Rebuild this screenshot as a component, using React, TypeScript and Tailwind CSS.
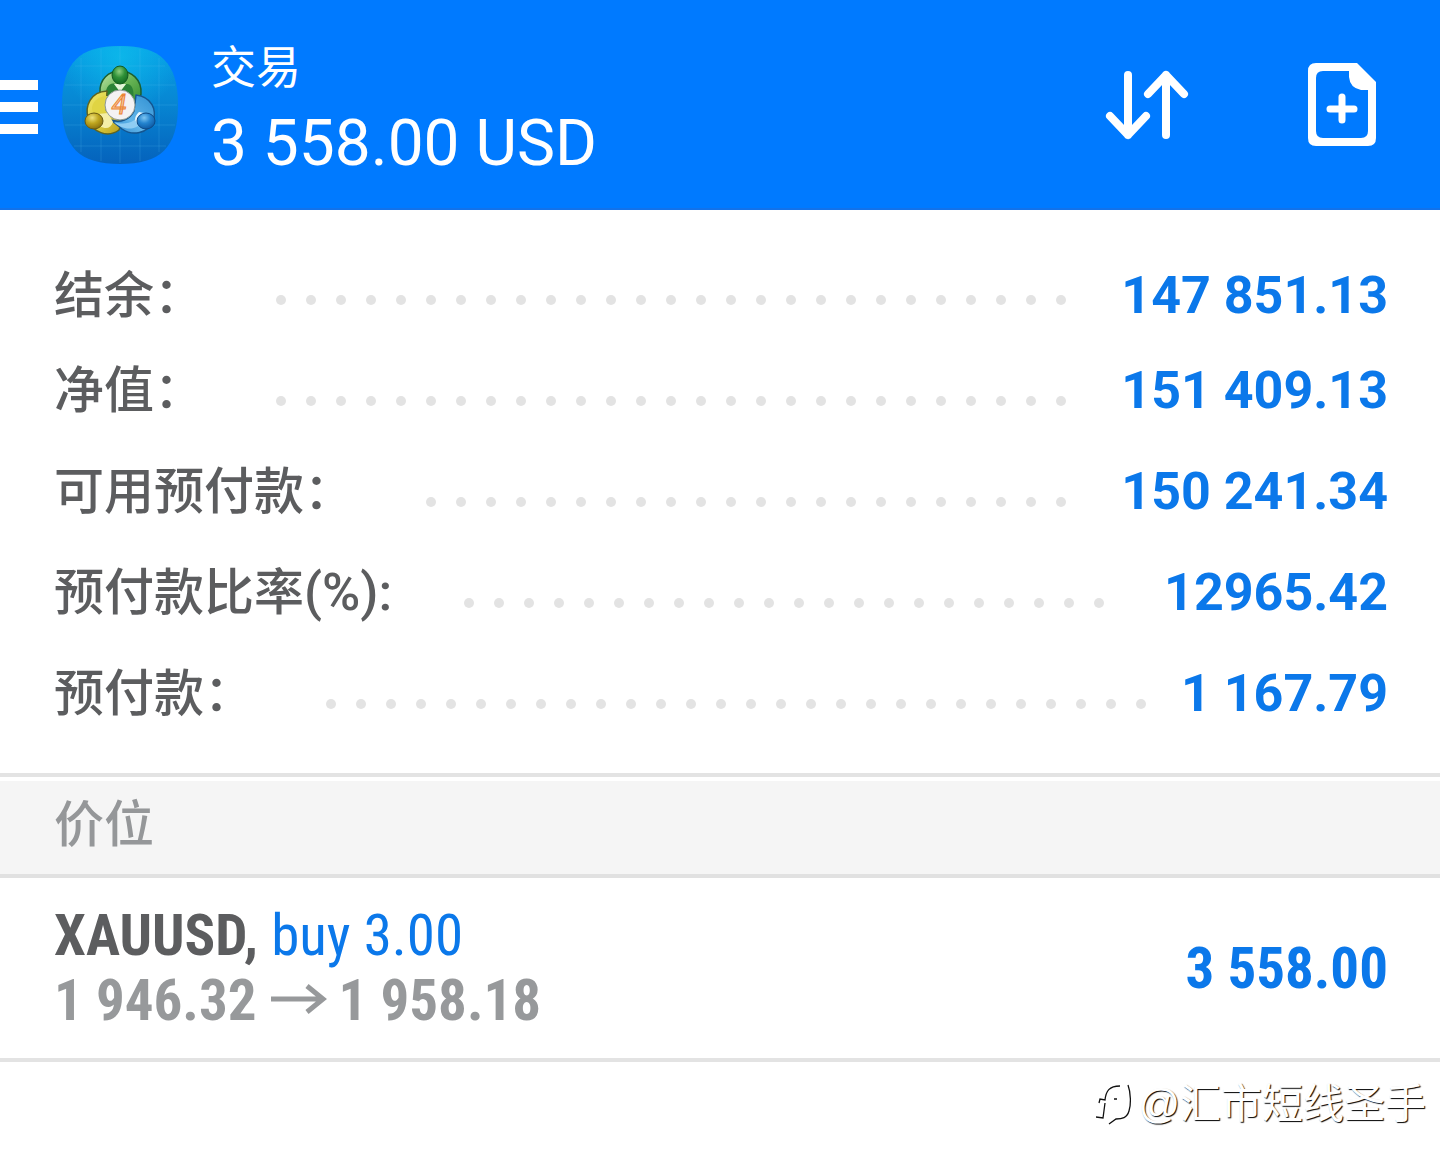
const summary = [
  { label: "结余：", value: "147 851.13" },
  { label: "净值：", value: "151 409.13" },
  { label: "可用预付款：", value: "150 241.34" },
  { label: "预付款比率", unit: "(%):", value: "12965.42" },
  { label: "预付款：", value: "1 167.79" },
];

const dots = Array.from({ length: 60 }, (_, i) => i);

function AppLogo() {
  return (
    <svg viewBox="0 0 116 118" className="h-[118px] w-[116px] shrink-0" role="img" aria-label="MetaTrader 4">
      <defs>
        <linearGradient id="tile" x1="0" y1="0" x2="0" y2="1">
          <stop offset="0" stopColor="#069fe6" />
          <stop offset="0.45" stopColor="#0788d4" />
          <stop offset="1" stopColor="#0562bc" />
        </linearGradient>
        <radialGradient id="glow" cx="0.5" cy="0.1" r="0.5">
          <stop offset="0" stopColor="#10c8ee" stopOpacity="0.6" />
          <stop offset="1" stopColor="#10c8ee" stopOpacity="0" />
        </radialGradient>
        <linearGradient id="greenBody" x1="0" y1="0" x2="1" y2="1">
          <stop offset="0" stopColor="#c3e8ad" />
          <stop offset="0.5" stopColor="#68b455" />
          <stop offset="1" stopColor="#2f8a2c" />
        </linearGradient>
        <linearGradient id="yellowBody" x1="0" y1="0" x2="1" y2="1">
          <stop offset="0" stopColor="#f0e868" />
          <stop offset="0.6" stopColor="#d8c93c" />
          <stop offset="1" stopColor="#b89c1c" />
        </linearGradient>
        <linearGradient id="blueBody" x1="1" y1="0" x2="0" y2="1">
          <stop offset="0" stopColor="#2f8fd2" />
          <stop offset="0.6" stopColor="#62b6ea" />
          <stop offset="1" stopColor="#2a86cc" />
        </linearGradient>
        <radialGradient id="greenHead" cx="0.45" cy="0.3" r="0.7">
          <stop offset="0" stopColor="#8fcf80" />
          <stop offset="0.5" stopColor="#2f9138" />
          <stop offset="1" stopColor="#136a22" />
        </radialGradient>
        <radialGradient id="yellowHead" cx="0.4" cy="0.3" r="0.7">
          <stop offset="0" stopColor="#eee27c" />
          <stop offset="0.5" stopColor="#bfa61f" />
          <stop offset="1" stopColor="#8c7310" />
        </radialGradient>
        <radialGradient id="blueHead" cx="0.4" cy="0.3" r="0.7">
          <stop offset="0" stopColor="#7fc6f2" />
          <stop offset="0.5" stopColor="#2484cf" />
          <stop offset="1" stopColor="#0f5ba5" />
        </radialGradient>
      </defs>
      <path d="M58 0C98 0 116 16 116 59S98 118 58 118 0 102 0 59 18 0 58 0Z" fill="url(#tile)" />
      <path d="M58 0C98 0 116 16 116 59S98 118 58 118 0 102 0 59 18 0 58 0Z" fill="url(#glow)" />
      <path
        d="M19 12V106M39 3V115M58 1V117M78 3V115M97 12V106M13 20H103M3 39H113M1 59H115M3 79H113M12 100H104"
        stroke="#5cc4ee"
        strokeOpacity="0.2"
        strokeWidth="1"
        fill="none"
      />
      <g strokeWidth="1.5" strokeLinejoin="round">
        <path d="M38 47C37 33 47 25 58 25S80 33 79 48L76 60L59 52L41 58Z" fill="url(#greenBody)" stroke="#1d5f2e" />
        <path d="M44 53C42 42 48 36 53 38L58 44L64 38C69 37 73 43 71 53L58 48Z" fill="#2b8236" stroke="none" />
        <path d="M52 38L58 46L64 38Z" fill="#e3f5d8" stroke="none" />
        <path d="M45 45C28 46 23 60 26 72C30 87 46 92 57 84L60 76L44 64Z" fill="url(#yellowBody)" stroke="#5f6420" />
        <path d="M33 55C29 60 29 65 33 68L44 66C41 61 42 55 46 50C40 50 36 52 33 55Z" fill="#e0d443" stroke="none" />
        <path d="M74 49C90 51 95 64 91 75C86 88 70 90 60 83L49 74C58 77 68 74 72 65Z" fill="url(#blueBody)" stroke="#15558f" />
        <path d="M52 76C64 80 74 76 78 67L83 68L76 80C68 85 58 82 52 76Z" fill="#8fcdf3" stroke="none" />
        <path d="M77 66L82 67L76 77C72 75 72 71 77 66Z" fill="#e6f6fe" stroke="none" />
        <path d="M36 68L46 67L51 76C49 82 44 84 38 80Z" fill="#f4eea6" stroke="none" />
      </g>
      <ellipse cx="58" cy="29" rx="8" ry="9" fill="url(#greenHead)" stroke="#145a20" />
      <ellipse cx="32" cy="75" rx="9" ry="8" fill="url(#yellowHead)" stroke="#6b5b10" />
      <ellipse cx="84" cy="75" rx="9" ry="8" fill="url(#blueHead)" stroke="#0f4a86" />
      <circle cx="58" cy="59" r="15" fill="#f4f2f3" stroke="#8d9a94" />
      <text x="57" y="68" textAnchor="middle" fontSize="27" fontStyle="italic" fill="#f6c79c" stroke="#ec8434" strokeWidth="1" className="font-[Roboto,sans-serif]">
        4
      </text>
    </svg>
  );
}

function SortIcon() {
  return (
    <svg viewBox="0 0 84 70" className="h-[70px] w-[84px]" fill="none" stroke="#fff" strokeWidth="8" strokeLinecap="round" strokeLinejoin="round" aria-hidden="true">
      <path d="M23 5V65M5 46L23 65L41 46" />
      <path d="M61 65V5M43 24L61 5L79 24" />
    </svg>
  );
}

function NewOrderIcon() {
  return (
    <svg viewBox="0 0 68 84" className="h-[84px] w-[68px]" aria-hidden="true">
      <path
        fill="#fff"
        fillRule="evenodd"
        d="M8 0H49L68 19V75Q68 83 60 83H8Q0 83 0 75V8Q0 0 8 0ZM15 8Q8 8 8 15V68Q8 75 15 75H53Q60 75 60 68V27H53Q42 25 41 14V8Z"
      />
      <path d="M34 34V57M22 46H46" stroke="#fff" strokeWidth="7" strokeLinecap="round" fill="none" />
    </svg>
  );
}

function PriceArrow() {
  return (
    <svg viewBox="0 0 56 34" className="mr-3 ml-3.5 h-[34px] w-[56px]" fill="none" stroke="#97999b" strokeWidth="5" role="img" aria-label="至">
      <path d="M0 15H52M36 2L52 15L36 28" />
    </svg>
  );
}

function Watermark() {
  return (
    <div className="flex items-center gap-1.5 font-['Liberation_Sans','Noto_Sans_CJK_SC',sans-serif] text-[41px] leading-[56px] text-white [text-shadow:1px_1px_1px_#000]">
      <svg viewBox="0 0 36 42" className="h-[42px] w-[36px]" fill="none" stroke="#111" strokeWidth="1.3" aria-hidden="true">
        <path d="M0 34L7 35L9 20M3 20L4 16L9 17C10 8 13 3 24 3M18 16H21M32 2C35 10 35 22 33 28C31 35 26 36 20 36L13 41" />
      </svg>
      <span>@汇市短线圣手</span>
    </div>
  );
}

export default function App() {
  return (
    <div className="min-h-screen bg-white font-[Roboto,'Noto_Sans_CJK_SC',sans-serif]">
      <header className="flex h-[210px] items-center border-b-2 border-[#1272ea] bg-[#007aff] pt-0.5 pr-16 text-white">
        <button type="button" aria-label="菜单" className="flex w-[38px] flex-col gap-3 pt-1">
          <span className="h-[10px] bg-white" />
          <span className="h-[10px] bg-white" />
          <span className="h-[10px] bg-white" />
        </button>
        <div className="ml-6">
          <AppLogo />
        </div>
        <div className="ml-[33px] flex-1 pt-3">
          <h1 className="text-[45px] leading-[66px]">交易</h1>
          <p className="text-[64px] leading-[84px]">3 558.00 USD</p>
        </div>
        <button type="button" aria-label="排序">
          <SortIcon />
        </button>
        <button type="button" aria-label="新订单" className="ml-[119px]">
          <NewOrderIcon />
        </button>
      </header>

      <main>
        <section className="border-b-4 border-[#e3e3e3] pt-[39px] pr-[52px] pb-[19px] pl-[54px]">
          {summary.map((row) => (
            <div key={row.label} className="group flex h-[101px] items-center">
              <span className="pb-5 text-[50px] leading-[64px] font-medium text-[#5c5d5f] group-first:pb-2">
                {row.label}
                {row.unit && <span className="text-[52px]">{row.unit}</span>}
              </span>
              <span aria-hidden="true" className="mr-[30px] ml-[72px] flex h-[10px] flex-1 flex-wrap gap-x-5 overflow-hidden">
                {dots.map((dot) => (
                  <span key={dot} className="size-[10px] rounded-full bg-[#e3e3e3]" />
                ))}
              </span>
              <span className="pb-5 text-[52px] leading-[64px] font-bold text-[#0b78ea] group-first:pb-2">{row.value}</span>
            </div>
          ))}
        </section>

        <h2 className="mt-1 border-b-4 border-[#e1e1e1] bg-[#f5f5f5] px-[54px] pt-2 pb-[13px] text-[50px] leading-[72px] font-medium text-[#959799]">价位</h2>

        <section className="flex items-center justify-between border-b-4 border-[#e3e3e3] pt-[25px] pr-[52px] pb-[25px] pl-[54px] font-['Roboto_Condensed',Roboto,'Noto_Sans_CJK_SC',sans-serif] text-[57px] leading-[65px] font-bold">
          <div>
            <p className="text-[#5c5d5f]">
              XAUUSD, <span className="font-normal text-[#0b78ea]">buy 3.00</span>
            </p>
            <p className="flex items-center text-[#97999b]">
              1 946.32
              <PriceArrow />
              1 958.18
            </p>
          </div>
          <span className="text-[#0b78ea]">3 558.00</span>
        </section>

        <footer className="flex justify-end pt-3.5 pr-[14px]">
          <Watermark />
        </footer>
      </main>
    </div>
  );
}
